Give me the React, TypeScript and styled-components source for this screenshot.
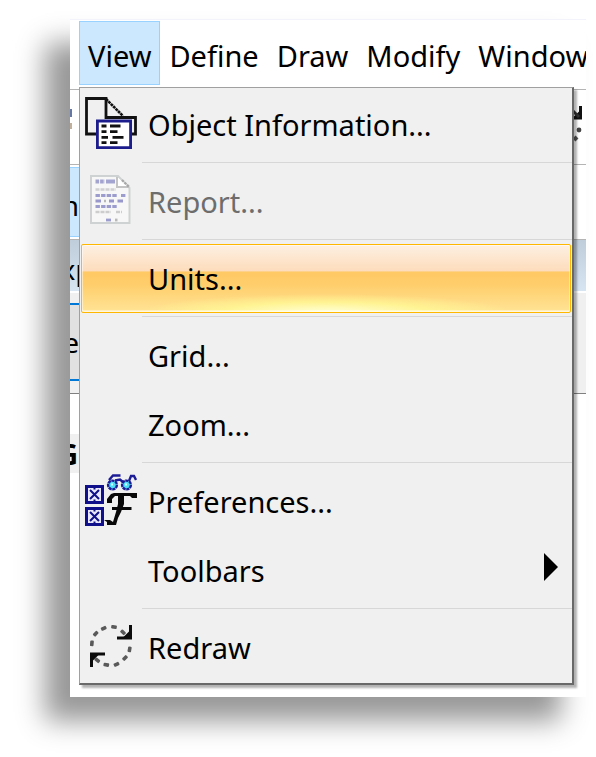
import React from 'react';
import styled, { createGlobalStyle, css } from 'styled-components';

const GlobalStyle = createGlobalStyle`
  * { box-sizing: border-box; }
  body {
    margin: 0;
    background: #fff;
    color: #000;
    font-family: "Noto Sans", "Open Sans", sans-serif;
  }
  button { font: inherit; color: inherit; }
`;

const Page = styled.main`
  padding: 19px 10px 60px 70px;
  overflow: hidden;
`;

const AppWindow = styled.div`
  overflow: hidden;
  background: #fff;
  border-top: 1px solid #f3f3fb;
  box-shadow: -25px 24px 26px #989898;
`;

const MenuBar = styled.nav`
  display: flex;
  padding: 1px 0 2px 9px;
`;

const MenuBarButton = styled.button<{ $open?: boolean }>`
  flex: none;
  height: 64px;
  padding: 5px 8px 0;
  border: 1px solid ${p => (p.$open ? '#99d1ff' : 'transparent')};
  background: ${p => (p.$open ? '#cce8ff' : 'transparent')};
  font-size: 29px;
  line-height: 40px;
  white-space: nowrap;
`;

const Workspace = styled.div`
  display: grid;
  > * { grid-area: 1 / 1; }
`;

const Backdrop = styled.div`
  display: flex;
  flex-direction: column;
  min-width: 0;
  padding-top: 2px;
`;

const ToolStrip = styled.div`
  display: flex;
  justify-content: space-between;
  align-items: flex-start;
  height: 76px;
  padding: 16px 4px 0 0;
  border: solid #b4b4b4;
  border-width: 1px 0;
`;

const TabStrip = styled.div`
  height: 74px;
  padding: 2px 0;
`;

const Sliver = styled.div`
  display: flex;
  justify-content: flex-end;
  align-items: center;
  width: 9px;
  overflow: hidden;
  font-size: 28px;
  line-height: 36px;
`;

const ActiveTab = styled(Sliver)`
  height: 70px;
  padding-top: 6px;
  border: solid #99d1ff;
  border-width: 1px 0;
  background: #cce8ff;
`;

const CaptionStrip = styled.div`
  display: flex;
  height: 54px;
  border-top: 1px solid #b4b4b4;
  border-bottom: 2px solid #fff;
  background: linear-gradient(#bfcddb, #d7e4f2);
`;

const CaptionText = styled(Sliver)`
  justify-content: center;
  padding: 6px 0 0 4px;
`;

const ButtonStrip = styled.div`
  height: 101px;
  padding-top: 10px;
  border-bottom: 1px solid #808080;
  background: #f0f0f0;
`;

const FocusedField = styled(Sliver)`
  height: 78px;
  border: solid #0078d7;
  border-width: 2px 0;
  background: #e1e1e1;
`;

const Heading = styled(Sliver)`
  height: 39px;
  margin-top: 40px;
  padding-right: 1px;
  background: #f0f0f0;
  font-weight: 700;
`;

const Menu = styled.div`
  z-index: 1;
  display: flex;
  flex-direction: column;
  margin: 0 12px 12px 9px;
  padding: 2px 0 1px;
  border: 1px solid #a0a0a0;
  border-right: 2px solid #696969;
  border-bottom: 2px solid #696969;
  background: #f0f0f0;
  box-shadow: 3px 3px 2px rgba(0, 0, 0, 0.3);
`;

const highlighted = css`
  border-color: #ffb700;
  background:
    radial-gradient(ellipse 38% 18px at 50% 100%, #ffffd2, rgba(255, 252, 150, 0.7) 55%, transparent),
    linear-gradient(#fdf0e2, #fddcbc 39%, #ffc964 40%, #ffce6c 60%, #ffe496);
  box-shadow: inset 0 0 0 1px rgba(255, 255, 255, 0.5), inset 0 -2px 0 rgba(255, 255, 255, 0.4);
`;

const MenuItem = styled.button<{ $highlighted?: boolean }>`
  display: grid;
  grid-template-columns: 60px 1fr auto;
  align-items: center;
  height: 69px;
  margin: 0 1px;
  padding: 0 12px 0 0;
  border: 1px solid transparent;
  border-radius: 2px;
  background: transparent;
  font-size: 29px;
  line-height: 40px;
  text-align: left;
  white-space: nowrap;
  &:disabled { color: #6d6d6d; }
  ${p => p.$highlighted && highlighted}
`;

const IconCell = styled.span`
  display: flex;
  justify-content: center;
  padding: 0 2px 3px 0;
`;

const Label = styled.span`
  padding: 1px 0 0 6px;
`;

const ArrowCell = styled.span`
  display: flex;
  padding-bottom: 8px;
`;

const Separator = styled.hr`
  flex: none;
  width: auto;
  height: 1px;
  margin: 3px 0 4px 62px;
  border: 0;
  background: #d7d7d7;
`;

const ObjectInfoIcon = () => (
  <svg width="52" height="52" viewBox="0 0 52 52" fill="none" aria-hidden="true">
    <path d="M1.500 1.500H21V20.500H50.500V37H1.500Z" fill="#f0f0f0" stroke="#111" strokeWidth="2.800" />
    <path d="M21 2L38 19" stroke="#111" strokeWidth="2.600" strokeDasharray="2.800 .6" />
    <path d="M12.400 24H45.600V50.600H12.400Z" fill="#fff" stroke="#1c1c8c" strokeWidth="2.800" />
    <path d="M16.500 29H21.500M25 29H35.500M16.500 34.700H21.500M25 34.700H32.500M16.500 40.300H23M27.500 40.300H38.500M16.500 45.700H21.500M25 45.700H32.500" stroke="#111" strokeWidth="2.800" />
  </svg>
);

const ReportIcon = () => (
  <svg width="42" height="50" viewBox="0 0 42 50" fill="none" aria-hidden="true">
    <path d="M1 1H28L39.500 13V48H1Z" fill="#f7f7f7" stroke="#cfd2d2" strokeWidth="2" />
    <path d="M27 2V12H39" fill="#fff" stroke="#c4c4c4" strokeWidth="2" />
    <path d="M32 5L39 12" stroke="#a8a8a8" strokeWidth="2.400" strokeDasharray="2.500 1" />
    <path d="M5.500 6.500H15" stroke="#a4a4d0" strokeWidth="4" strokeDasharray="3.600 1" />
    <path d="M16 6.500H25" stroke="#a4a4d0" strokeWidth="4" />
    <path d="M5.500 14.500H26" stroke="#d0d0d2" strokeWidth="2.600" strokeDasharray="4 1" />
    <path d="M5.500 20.500H27M31 20.500H36" stroke="#9c9cce" strokeWidth="2.800" strokeDasharray="4.400 1.200" />
    <path d="M5.500 26H11M19 26H24M27.500 26H33" stroke="#9898cc" strokeWidth="2.800" />
    <path d="M14 26H16" stroke="#b8b8b8" strokeWidth="2.600" />
    <path d="M5.500 31.500H27" stroke="#9c9cce" strokeWidth="2.800" strokeDasharray="4.400 1.200" />
    <path d="M5.500 37H21M26 37H32" stroke="#cdcdcd" strokeWidth="2.600" strokeDasharray="4 1" />
    <path d="M16 45H21" stroke="#9c9cce" strokeWidth="2.800" />
    <path d="M25 45H27.500" stroke="#b8b8b8" strokeWidth="2.800" />
  </svg>
);

const PreferencesIcon = () => (
  <svg width="52" height="52" viewBox="0 0 52 52" fill="none" aria-hidden="true">
    <path d="M0 11H19V30H0ZM0 33H19V52H0Z" fill="#10108a" />
    <path d="M3 14H16V27H3ZM3 36H16V49H3Z" fill="#e9e9fb" />
    <path d="M5 16L14 25M14 16L5 25M5 38L14 47M14 38L5 47" stroke="#10108a" strokeWidth="2" />
    <path d="M8.500 13.500h2v2h-2zM8.500 25.500h2v2h-2zM8.500 35.500h2v2h-2zM8.500 47.500h2v2h-2z" fill="#10108a" />
    <circle cx="27.500" cy="11" r="4.400" fill="#4ce0f6" stroke="#1c1c96" strokeWidth="2.400" strokeDasharray="3.200 .6" />
    <circle cx="41.500" cy="11" r="4.400" fill="#4ce0f6" stroke="#1c1c96" strokeWidth="2.400" strokeDasharray="3.200 .6" />
    <path d="M26 9.500h2v2h-2zM40 9.500h2v2h-2z" fill="#d9fcff" />
    <path d="M24 6L28 1.500H35.500M30 6.500L35 5.500L38 8M44 7L46 2H49L51 6" stroke="#1c1c96" strokeWidth="2.400" />
    <path d="M22 29V25L26 20L29 19H52V24H47L45 22H39V30L36 38L33 44L31 51H22V48L19 46H25L28 48L31 38L33 30V22H30L27 25V29Z" fill="#080808" />
    <path d="M27 34.500H46.500" stroke="#080808" strokeWidth="3" />
  </svg>
);

const dots = [
  [13.700, 3.300, -25], [5.700, 8.700, -48], [1.900, 18.300, 95], [24, 2, 10], [33, 7.300, 45],
  [39.600, 24.300, 100], [35, 33, -45], [26.500, 39.300, -25], [16.300, 39.800, 10], [7.300, 35.300, 40],
];

const RedrawIcon = () => (
  <svg width="42" height="42" viewBox="0 0 42 42" fill="none" aria-hidden="true">
    {dots.map(([x, y, turn]) => (
      <rect key={`${x}-${y}`} x={x - 2.800} y={y - 1.800} width="5.600" height="3.600" rx="1" fill="#5a5a5a" transform={`rotate(${turn} ${x} ${y})`} />
    ))}
    <path d="M40.500 0V13H27" stroke="#0c0c0c" strokeWidth="3" />
    <path d="M39.500 6V12H33.500Z" fill="#0c0c0c" />
    <path d="M1.500 42V29H15" stroke="#0c0c0c" strokeWidth="3" />
    <path d="M2.500 36V30H8.500Z" fill="#0c0c0c" />
  </svg>
);

const SubmenuArrow = () => (
  <svg width="14" height="28" viewBox="0 0 14 28" aria-hidden="true">
    <path d="M0 0L14 14L0 28Z" fill="#000" />
  </svg>
);

const ToolEdgeLeft = () => (
  <svg width="2" height="24" viewBox="0 0 2 24" aria-hidden="true">
    <path d="M0 3H2V11H0Z" fill="#6678a8" />
    <path d="M0 17H2V23H0Z" fill="#c2b09a" />
  </svg>
);

const ToolEdgeRight = () => (
  <svg width="12" height="38" viewBox="0 0 12 38" fill="none" aria-hidden="true">
    <path d="M10.500 0V12H1" stroke="#111" strokeWidth="3" />
    <path d="M9.500 5V11H3.500Z" fill="#111" />
    <path d="M3 5L9 11" stroke="#333" strokeWidth="3" />
    <circle cx="9" cy="24" r="2.400" fill="#444" />
    <path d="M4 34L7 31" stroke="#555" strokeWidth="4" />
  </svg>
);

type Entry = {
  label: string;
  icon?: React.ReactNode;
  disabled?: boolean;
  highlighted?: boolean;
  submenu?: boolean;
};

const groups: Entry[][] = [
  [{ label: 'Object Information...', icon: <ObjectInfoIcon /> }],
  [{ label: 'Report...', icon: <ReportIcon />, disabled: true }],
  [{ label: 'Units...', highlighted: true }],
  [{ label: 'Grid...' }, { label: 'Zoom...' }],
  [{ label: 'Preferences...', icon: <PreferencesIcon /> }, { label: 'Toolbars', submenu: true }],
  [{ label: 'Redraw', icon: <RedrawIcon /> }],
];

export default function App() {
  return (
    <>
      <GlobalStyle />
      <Page>
        <AppWindow>
          <MenuBar>
            {['View', 'Define', 'Draw', 'Modify', 'Window'].map(name => (
              <MenuBarButton key={name} $open={name === 'View'}>{name}</MenuBarButton>
            ))}
          </MenuBar>
          <Workspace>
            <Backdrop>
              <ToolStrip><ToolEdgeLeft /><ToolEdgeRight /></ToolStrip>
              <TabStrip><ActiveTab>n</ActiveTab></TabStrip>
              <CaptionStrip><CaptionText>xp</CaptionText></CaptionStrip>
              <ButtonStrip><FocusedField>e</FocusedField></ButtonStrip>
              <Heading>G</Heading>
            </Backdrop>
            <Menu role="menu">
              {groups.map((group, index) => (
                <React.Fragment key={group[0].label}>
                  {index > 0 && <Separator />}
                  {group.map(entry => (
                    <MenuItem
                      key={entry.label}
                      role="menuitem"
                      disabled={entry.disabled}
                      $highlighted={entry.highlighted}
                      aria-haspopup={entry.submenu ? 'menu' : undefined}
                    >
                      <IconCell>{entry.icon}</IconCell>
                      <Label>{entry.label}</Label>
                      {entry.submenu && <ArrowCell><SubmenuArrow /></ArrowCell>}
                    </MenuItem>
                  ))}
                </React.Fragment>
              ))}
            </Menu>
          </Workspace>
        </AppWindow>
      </Page>
    </>
  );
}
